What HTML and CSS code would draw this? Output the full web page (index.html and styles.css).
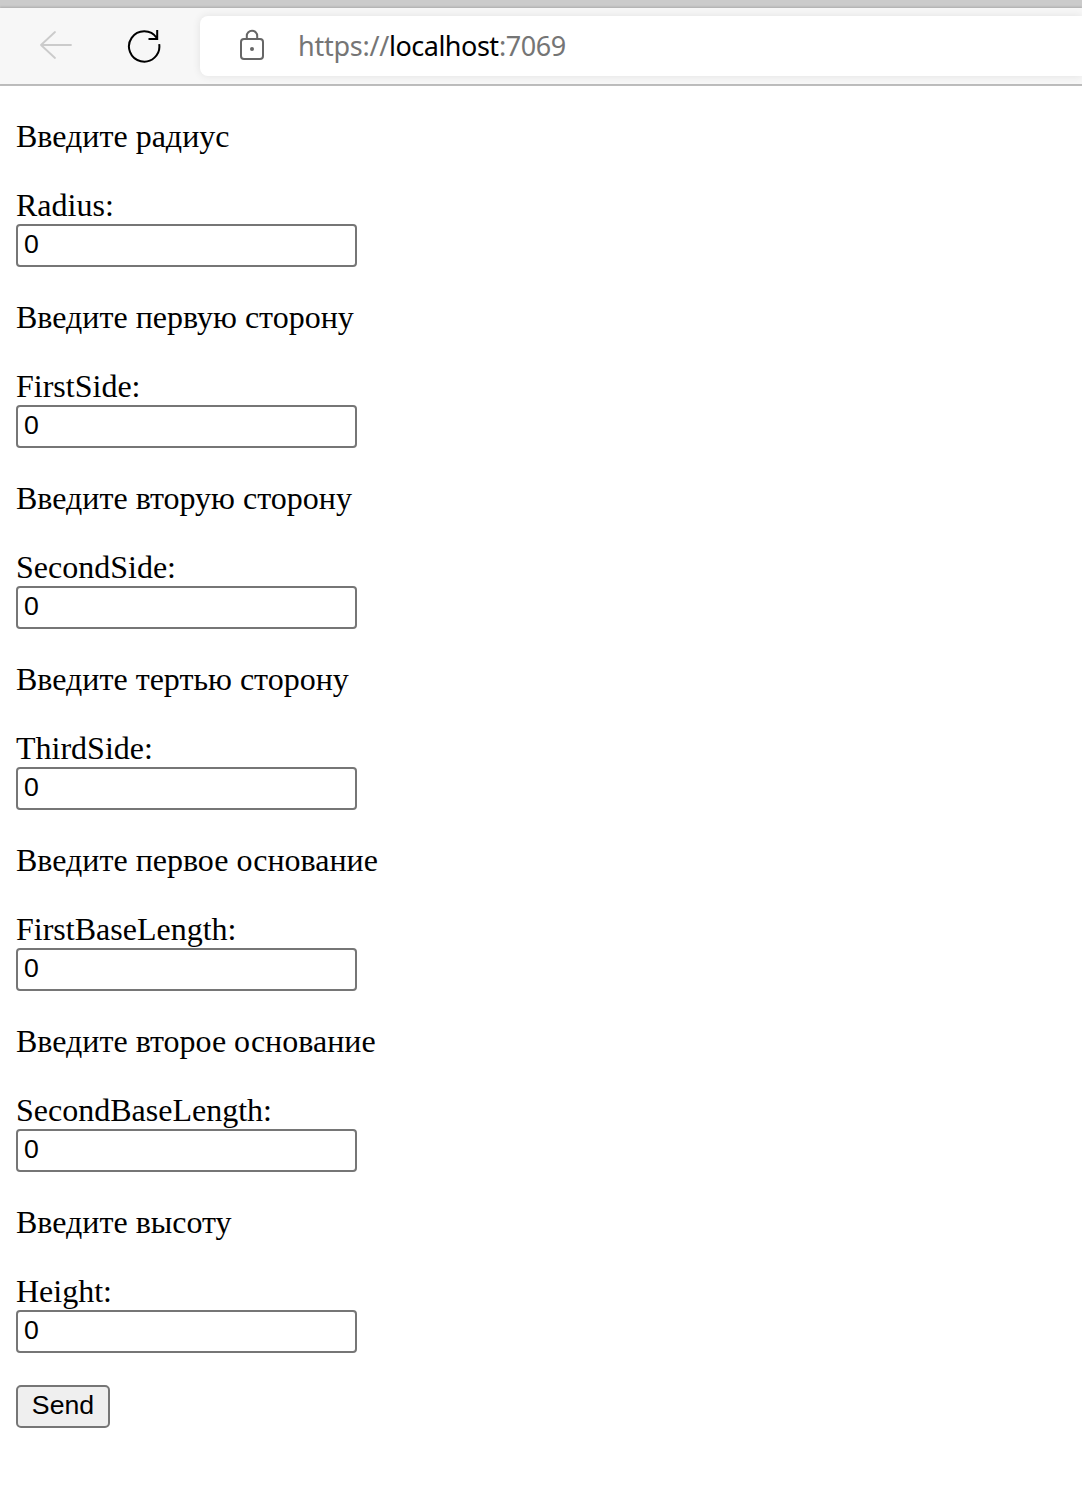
FILE: index.html
```html
<!DOCTYPE html>
<html lang="ru">
<head>
<meta charset="utf-8">
<title>localhost:7069</title>
<link rel="stylesheet" href="styles.css">
</head>
<body>
<header class="browser">
  <div class="toolbar">
    <svg class="icon back" width="36" height="34" viewBox="0 0 36 34"><path d="M33 17H3M17 4L3 17L17 30"/></svg>
    <svg class="icon reload" width="36" height="36" viewBox="0 0 36 36"><path d="M33.200 16.200A15.200 15.200 0 1 1 30.800 10M31.200 2V11H22.500"/></svg>
    <div class="address">
      <svg class="icon lock" width="26" height="32" viewBox="0 0 26 32"><rect x="2" y="9.900" width="22" height="20" rx="3"/><path d="M7.800 10V7a5.200 5.200 0 0 1 10.400 0v3"/><circle cx="13" cy="20" r="2"/></svg>
      <div class="url"><span class="scheme">https://</span><span class="host">localhost</span><span class="port">:7069</span></div>
    </div>
  </div>
</header>
<form class="page">
  <p class="hint">Введите радиус</p>
  <label class="field">Radius:<input class="box" value="0"></label>
  <p class="hint">Введите первую сторону</p>
  <label class="field">FirstSide:<input class="box" value="0"></label>
  <p class="hint">Введите вторую сторону</p>
  <label class="field">SecondSide:<input class="box" value="0"></label>
  <p class="hint">Введите тертью сторону</p>
  <label class="field">ThirdSide:<input class="box" value="0"></label>
  <p class="hint">Введите первое основание</p>
  <label class="field">FirstBaseLength:<input class="box" value="0"></label>
  <p class="hint">Введите второе основание</p>
  <label class="field">SecondBaseLength:<input class="box" value="0"></label>
  <p class="hint">Введите высоту</p>
  <label class="field">Height:<input class="box" value="0"></label>
  <button class="send" type="button">Send</button>
</form>
</body>
</html>
```
FILE: styles.css
```css
* { box-sizing: border-box; }
body {
  margin: 0;
  background: #fff;
  color: #000;
  font: 32px/37px "Liberation Serif", "Times New Roman", serif;
  overflow: hidden;
}
.browser {
  height: 86px;
  border-top: 8px solid #cbcbcb;
  border-bottom: 2px solid #bdbdbd;
  background: #f7f7f7;
}
.toolbar {
  display: flex;
  align-items: center;
  height: 76px;
  padding-left: 38px;
  box-shadow: 0 -1px 2px #aaa;
  overflow: hidden;
}
.icon { flex: none; fill: none; stroke-linecap: round; stroke-linejoin: round; }
.back { stroke: #cbcbcb; stroke-width: 1.8; margin-top: -2px; }
.reload { stroke: #000; stroke-width: 2; margin-left: 52px; stroke-linecap: butt; stroke-linejoin: miter; }
.address {
  display: flex;
  align-items: center;
  flex: 1;
  height: 60px;
  margin-left: 38px;
  padding-left: 39px;
  border-radius: 8px 0 0 8px;
  background: #fff;
  box-shadow: 0 0 8px rgba(0, 0, 0, .09);
}
.lock { stroke: #666; stroke-width: 2; margin-top: -2px; }
.lock circle { fill: #666; stroke: none; }
.url {
  display: flex;
  margin-left: 33px;
  font: 27px/36px "Noto Sans", sans-serif;
  color: #757575;
}
.scheme { width: 91px; letter-spacing: -.25px; }
.host { width: 110px; color: #000; letter-spacing: -.5px; }
.port { letter-spacing: -.45px; }
.page { padding: 32px 16px; }
.hint { margin: 0 0 32px; }
.field { display: block; margin-bottom: 32px; }
.box {
  display: block;
  width: 341px;
  height: 43px;
  margin: 0;
  padding: 0 6px 2px;
  border: 2px solid #767676;
  border-radius: 4px;
  background: #fff;
  color: #000;
  font: 26.667px "Liberation Sans", Arial, sans-serif;
}
.send {
  display: block;
  width: 94px;
  height: 43px;
  padding: 0 0 2px;
  border: 2px solid #767676;
  border-radius: 5px;
  background: #efefef;
  color: #000;
  font: 26.667px "Liberation Sans", Arial, sans-serif;
}
```
